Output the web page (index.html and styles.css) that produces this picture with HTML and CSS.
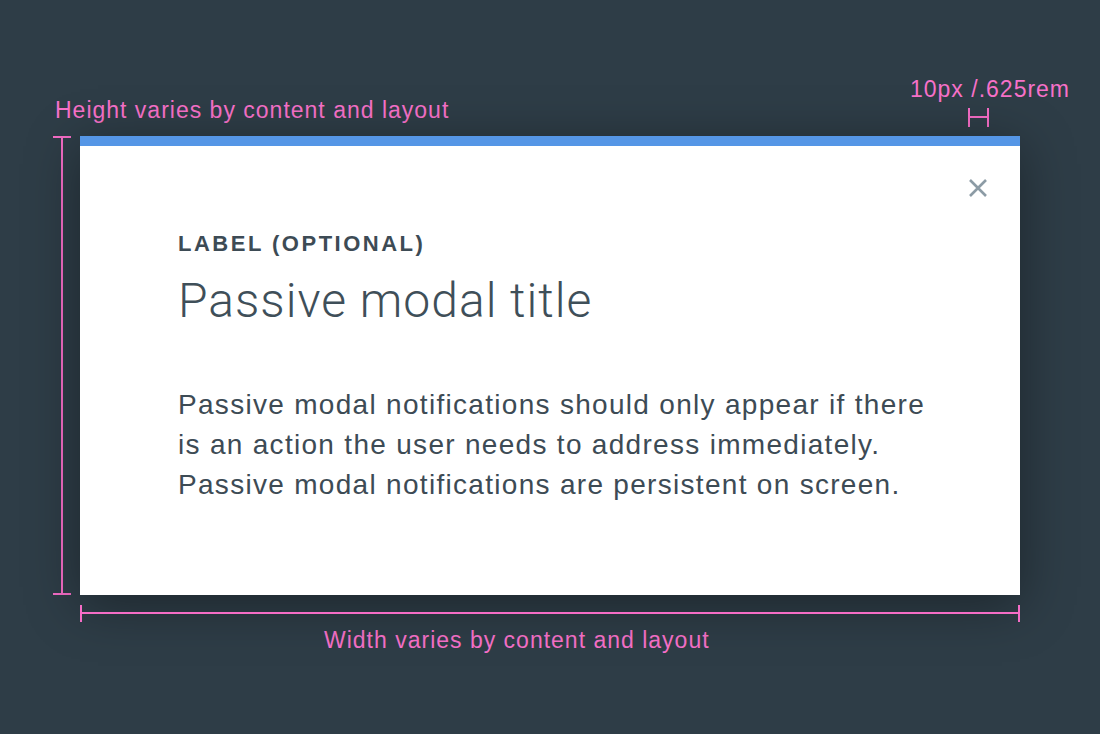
FILE: index.html
```html
<!DOCTYPE html>
<html lang="en">
<head>
<meta charset="utf-8">
<title>Passive modal</title>
<link rel="stylesheet" href="styles.css">
</head>
<body>
<main class="canvas">
  <div class="top-notes">
    <span class="note note-height">Height varies by content and layout</span>
    <div class="note-right">
      <span class="note">10px /.625rem</span>
      <span class="h-tick"></span>
    </div>
  </div>
  <div class="row">
    <div class="vdim"></div>
    <section class="modal">
      <button class="close" aria-label="Close">
        <svg width="20" height="20" viewBox="0 0 20 20"><path d="M2 2 L18 18 M18 2 L2 18" stroke="#8c9ba5" stroke-width="2.6" fill="none"/></svg>
      </button>
      <p class="label">LABEL (OPTIONAL)</p>
      <h1 class="title">Passive modal title</h1>
      <p class="body">Passive modal notifications should only appear if there is an action the user needs to address immediately. Passive modal notifications are persistent on screen.</p>
    </section>
  </div>
  <div class="hdim"></div>
  <div class="note note-width">Width varies by content and layout</div>
</main>
</body>
</html>
```
FILE: styles.css
```css
html, body {
  margin: 0;
  height: 100%;
}
body {
  background: #2e3d47;
  font-family: "Liberation Sans", Arial, sans-serif;
  overflow: hidden;
}
.canvas {
  padding: 76px 0 0 53px;
}
.note {
  color: #f771c9;
  font-size: 23px;
  line-height: 26px;
  letter-spacing: 1px;
  white-space: nowrap;
}
.top-notes {
  display: flex;
  align-items: flex-end;
  width: 1017px;
}
.note-height {
  margin: 0 0 13px 2px;
}
.note-right {
  margin-left: auto;
  width: 160px;
  display: flex;
  flex-direction: column;
  margin-bottom: 9px;
}
.h-tick {
  margin: 6px 0 0 58px;
  width: 17px;
  height: 19px;
  border-left: 2px solid #f56dc6;
  border-right: 2px solid #f56dc6;
  position: relative;
}
.h-tick::after {
  content: "";
  position: absolute;
  left: 0;
  right: 0;
  top: 8px;
  height: 2px;
  background: #f56dc6;
}
.row {
  display: flex;
  gap: 9px;
}
.vdim {
  width: 18px;
  border-top: 2px solid #f56dc6;
  border-bottom: 2px solid #f56dc6;
  position: relative;
}
.vdim::after {
  content: "";
  position: absolute;
  top: 0;
  bottom: 0;
  left: 8px;
  width: 2px;
  background: #f56dc6;
}
.modal {
  position: relative;
  width: 940px;
  box-sizing: border-box;
  background: #fff;
  border-top: 10px solid #5596e6;
  padding: 85px 40px 90px 98px;
  box-shadow: 0 10px 50px rgba(0, 0, 0, 0.38);
}
.close {
  position: absolute;
  top: 32px;
  right: 32px;
  width: 20px;
  height: 20px;
  padding: 0;
  border: 0;
  background: none;
  display: block;
}
.close svg {
  display: block;
}
.label {
  margin: 0;
  font-size: 22px;
  line-height: 26px;
  font-weight: 700;
  letter-spacing: 2.5px;
  color: #3d4b55;
}
.title {
  margin: 16px 0 0;
  font-family: Roboto, "Liberation Sans", sans-serif;
  font-weight: 300;
  font-size: 48px;
  line-height: 56px;
  letter-spacing: 1px;
  color: #3f4f59;
}
.body {
  margin: 56px 0 0;
  max-width: 770px;
  font-size: 28px;
  line-height: 40px;
  letter-spacing: 1.3px;
  color: #3d4b55;
}
.hdim {
  margin: 10px 0 0 27px;
  width: 936px;
  height: 17px;
  border-left: 2px solid #f56dc6;
  border-right: 2px solid #f56dc6;
  position: relative;
}
.hdim::after {
  content: "";
  position: absolute;
  left: 0;
  right: 0;
  top: 7px;
  height: 2px;
  background: #f56dc6;
}
.note-width {
  display: block;
  margin: 5px 0 0 271px;
}
```
